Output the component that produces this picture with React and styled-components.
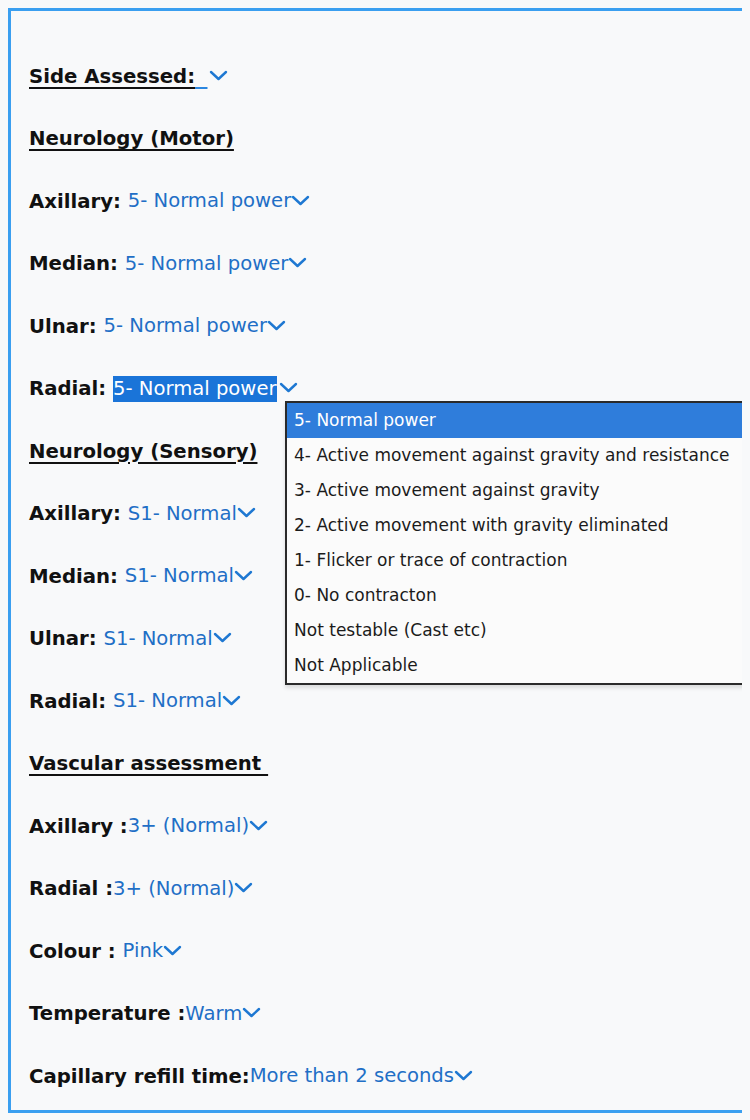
import React from "react";
import styled, { createGlobalStyle } from "styled-components";

const Global = createGlobalStyle`
  html {
    background: #f8f9fa;
    overflow: hidden;
  }
  body {
    margin: 8px;
    font-family: "DejaVu Sans", Verdana, sans-serif;
  }
`;

/* The form panel runs on past the right edge of the window, so it has no right border. */
const Panel = styled.div`
  box-sizing: border-box;
  width: calc(100vw - 8px);
  border: 3px solid #3a9ff0;
  border-right: 0;
  padding: 34px 0 2px 18px;
  display: flex;
  flex-direction: column;
  overflow: hidden;
`;

const Row = styled.div`
  height: 62.5px;
  display: flex;
  align-items: center;
  white-space: pre;
`;

const Label = styled.span`
  font-weight: bold;
  font-size: 19.7px;
  color: #111;
  text-decoration: ${(p) => (p.$heading ? "underline" : "none")};
  text-decoration-thickness: 2px;
  text-underline-offset: 4px;
`;

const Select = styled.span`
  position: relative;
  display: inline-flex;
  align-items: center;
`;

const Value = styled.span`
  font-size: 19.6px;
  line-height: 26px;
  color: ${(p) => (p.$selected ? "#fff" : "#1f6fc6")};
  background: ${(p) => (p.$selected ? "#1a74d8" : "transparent")};
  text-decoration: ${(p) => (p.$blank ? "underline" : "none")};
  text-decoration-color: #2a86e0;
  text-decoration-thickness: 2px;
  text-underline-offset: 5px;
`;

const Chevron = styled.svg`
  width: 19px;
  height: 11px;
  margin-left: ${(p) => p.$gap || 0}px;
  margin-top: -2px;
  flex: none;
`;

const List = styled.ul`
  position: absolute;
  top: calc(100% - 1px);
  left: 172px;
  width: 500px;
  margin: 0;
  padding: 0;
  list-style: none;
  background: #fbfbfb;
  border: 2px solid #2a2a2a;
  box-shadow: 0 3px 4px rgba(0, 0, 0, 0.12);
  z-index: 2;
`;

const Option = styled.li`
  height: 35px;
  line-height: 35px;
  padding-left: 7px;
  font-size: 17px;
  color: ${(p) => (p.$active ? "#fff" : "#1b1b1b")};
  background: ${(p) => (p.$active ? "#2f7ddb" : "transparent")};
`;

const Arrow = ({ gap }) => (
  <Chevron $gap={gap} viewBox="0 0 19 11">
    <path
      d="M2 2 L9.5 9 L17 2"
      fill="none"
      stroke="#1e78d2"
      strokeWidth="2.4"
      strokeLinecap="round"
      strokeLinejoin="round"
    />
  </Chevron>
);

const powerOptions = [
  "5- Normal power",
  "4- Active movement against gravity and resistance",
  "3- Active movement against gravity",
  "2- Active movement with gravity eliminated",
  "1- Flicker or trace of contraction",
  "0- No contracton",
  "Not testable (Cast etc)",
  "Not Applicable",
];

const Field = ({ label, value, open }) => (
  <Row>
    <Label>{label}</Label>
    <Select>
      <Value $selected={open}>{value}</Value>
      <Arrow gap={open ? 2 : 0} />
      {open && (
        <List>
          {powerOptions.map((o, i) => (
            <Option key={o} $active={i === 0}>
              {o}
            </Option>
          ))}
        </List>
      )}
    </Select>
  </Row>
);

const Heading = ({ children }) => (
  <Row>
    <Label $heading>{children}</Label>
  </Row>
);

export default function App() {
  return (
    <>
      <Global />
      <Panel>
        <Row>
          <Label $heading>Side Assessed:</Label>
          <Select>
            <Value $blank>{"\u00a0\u00a0"}</Value>
            <Arrow gap={2} />
          </Select>
        </Row>
        <Heading>Neurology (Motor)</Heading>
        <Field label="Axillary: " value="5- Normal power" />
        <Field label="Median: " value="5- Normal power" />
        <Field label="Ulnar: " value="5- Normal power" />
        <Field label="Radial: " value="5- Normal power" open />
        <Heading>Neurology (Sensory)</Heading>
        <Field label="Axillary: " value="S1- Normal" />
        <Field label="Median: " value="S1- Normal" />
        <Field label="Ulnar: " value="S1- Normal" />
        <Field label="Radial: " value="S1- Normal" />
        <Heading>{"Vascular assessment "}</Heading>
        <Field label="Axillary :" value="3+ (Normal)" />
        <Field label="Radial :" value="3+ (Normal)" />
        <Field label="Colour : " value="Pink" />
        <Field label="Temperature :" value="Warm" />
        <Field label="Capillary refill time:" value="More than 2 seconds" />
      </Panel>
    </>
  );
}
